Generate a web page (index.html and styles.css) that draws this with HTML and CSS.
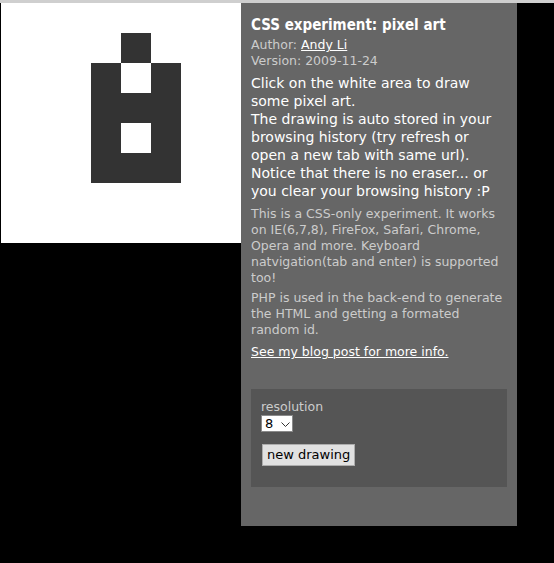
FILE: index.html
```html
<!DOCTYPE html>
<html lang="en">

<head>
    <meta charset="UTF-8">
    <title>CSS experiment: pixel art</title>
    <link rel="stylesheet" href="styles.css">
</head>

<body>
    <div class="topbar"></div>
    <div id="page">
        <!-- drawing area, 8x8 cells -->
        <div id="canvas">
            <a class="cell"></a><a class="cell"></a><a class="cell"></a><a class="cell"></a><a class="cell"></a><a class="cell"></a><a class="cell"></a><a class="cell"></a>
            <a class="cell"></a><a class="cell"></a><a class="cell"></a><a class="cell"></a><a class="cell on"></a><a class="cell"></a><a class="cell"></a><a class="cell"></a>
            <a class="cell"></a><a class="cell"></a><a class="cell"></a><a class="cell on"></a><a class="cell"></a><a class="cell on"></a><a class="cell"></a><a class="cell"></a>
            <a class="cell"></a><a class="cell"></a><a class="cell"></a><a class="cell on"></a><a class="cell on"></a><a class="cell on"></a><a class="cell"></a><a class="cell"></a>
            <a class="cell"></a><a class="cell"></a><a class="cell"></a><a class="cell on"></a><a class="cell"></a><a class="cell on"></a><a class="cell"></a><a class="cell"></a>
            <a class="cell"></a><a class="cell"></a><a class="cell"></a><a class="cell on"></a><a class="cell on"></a><a class="cell on"></a><a class="cell"></a><a class="cell"></a>
            <a class="cell"></a><a class="cell"></a><a class="cell"></a><a class="cell"></a><a class="cell"></a><a class="cell"></a><a class="cell"></a><a class="cell"></a>
            <a class="cell"></a><a class="cell"></a><a class="cell"></a><a class="cell"></a><a class="cell"></a><a class="cell"></a><a class="cell"></a><a class="cell"></a>
        </div>

        <div id="info">
            <h1>CSS experiment: pixel art</h1>
            <p class="meta">
                Author: <a href="#">Andy Li</a><br>
                Version: 2009-11-24
            </p>
            <p class="lead">
                Click on the white area to draw some pixel art.<br>
                The drawing is auto stored in your browsing history (try refresh or open a new tab with same url).
                Notice that there is no eraser... or you clear your browsing history :P
            </p>
            <p class="small">This is a CSS-only experiment. It works on IE(6,7,8), FireFox, Safari, Chrome, Opera and more. Keyboard natvigation(tab and enter) is supported too!</p>
            <p class="small">PHP is used in the back-end to generate the HTML and getting a formated random id.</p>
            <p class="small more"><a href="#">See my blog post for more info.</a></p>

            <form class="options">
                <label for="resolution">resolution</label>
                <span class="select-wrap">
                    <select id="resolution">
                        <option>8</option>
                        <option>16</option>
                        <option>32</option>
                    </select>
                    <svg class="chevron" width="9" height="5" viewBox="0 0 9 5">
                        <path d="M0.5 0.5 L4.5 4.5 L8.5 0.5" fill="none" stroke="#333" stroke-width="1" />
                    </svg>
                </span>
                <button type="button">new drawing</button>
            </form>
        </div>
    </div>
</body>

</html>
```

FILE: styles.css
```css
body,
html {
    margin: 0;
}

body {
    background-color: black;
    font-family: 'DejaVu Sans', Verdana, sans-serif;
}

.topbar {
    height: 3px;
    background-color: #cfcfcf;
}

#page {
    display: flex;
    align-items: flex-start;
    padding-left: 1px;
}

#canvas {
    display: grid;
    grid-template-columns: repeat(8, 30px);
    grid-auto-rows: 30px;
    background-color: white;
}

.cell {
    display: block;
    background-color: white;
}

.cell.on {
    background-color: #333;
}

#info {
    width: 256px;
    padding: 10px 10px 39px;
    background-color: #666;
    color: #ccc;
    font-size: 12.5px;
    line-height: 16px;
}

#info a {
    color: white;
}

h1 {
    margin: 3px 0 3px;
    font-family: 'DejaVu Sans Condensed', 'DejaVu Sans', sans-serif;
    font-size: 15px;
    line-height: 18px;
    color: white;
}

p {
    margin: 0 0 4px;
}

.meta {
    margin-bottom: 5px;
}

.lead {
    font-size: 14px;
    line-height: 18px;
    color: white;
    margin-bottom: 6px;
}

.more {
    margin-top: 6px;
}

.options {
    display: flex;
    flex-direction: column;
    align-items: flex-start;
    margin-top: 29px;
    padding: 10px 10px 21px;
    background-color: #555;
}

.select-wrap {
    position: relative;
    display: block;
}

select {
    appearance: none;
    width: 32px;
    height: 17px;
    margin: 0;
    padding: 0 0 0 3px;
    font-family: inherit;
    font-size: 13px;
    line-height: 15px;
    color: black;
    background-color: white;
    border: 1px solid #8a8a8a;
    border-radius: 0;
}

.chevron {
    position: absolute;
    left: 20px;
    top: 7px;
    pointer-events: none;
}

button {
    margin: 12px 0 0 1px;
    padding: 2px 4px;
    font-family: inherit;
    font-size: 13px;
    line-height: 16px;
    background-color: #e1e1e1;
    border: 1px solid #adadad;
    border-radius: 0;
    color: black;
}
```
